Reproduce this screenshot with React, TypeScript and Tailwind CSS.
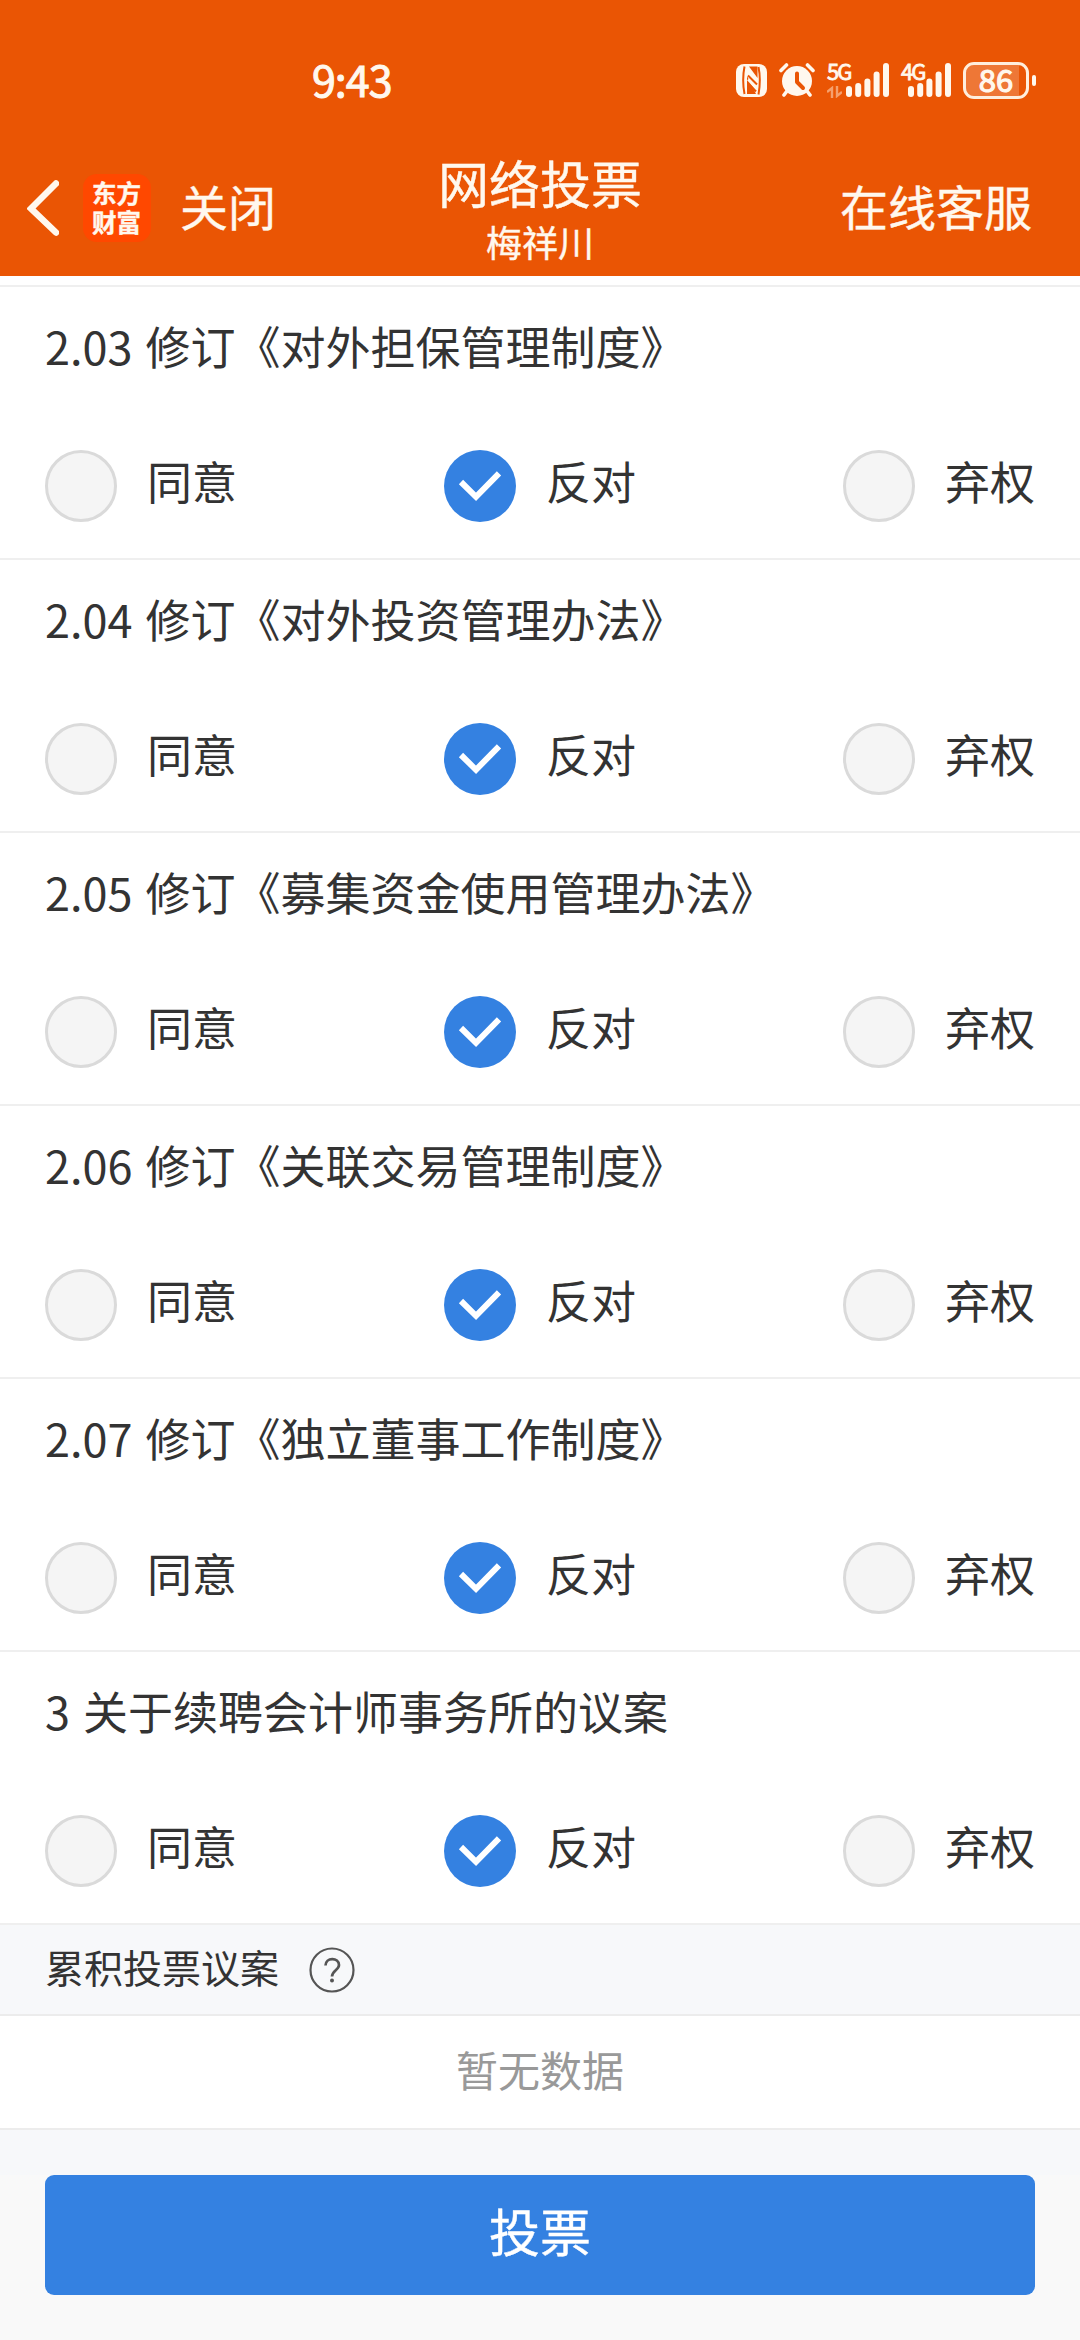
import clsx from 'clsx';
import { useState } from 'react';

const CHOICES = ['同意', '反对', '弃权'];

const PROPOSALS = [
  { no: '2.03', title: '修订《对外担保管理制度》' },
  { no: '2.04', title: '修订《对外投资管理办法》' },
  { no: '2.05', title: '修订《募集资金使用管理办法》' },
  { no: '2.06', title: '修订《关联交易管理制度》' },
  { no: '2.07', title: '修订《独立董事工作制度》' },
  { no: '3', title: '关于续聘会计师事务所的议案' },
];

const BARS = [
  { x: 0, h: 11 },
  { x: 9.2, h: 14 },
  { x: 18.4, h: 18.5 },
  { x: 27.6, h: 25.5 },
  { x: 37, h: 34 },
];

const SignalBars = () => (
  <svg width="43" height="34" viewBox="0 0 43 34" fill="#fff8ee">
    {BARS.map((bar) => (
      <rect key={bar.x} x={bar.x} y={34 - bar.h} width="6" height={bar.h} rx="3" />
    ))}
  </svg>
);

const NfcIcon = () => (
  <svg width="31" height="33" viewBox="0 0 31 33">
    <rect width="31" height="33" rx="8" fill="#fff8ee" />
    <path
      d="M8.500 2.500C7 10 7 22 8.500 30M22.500 30.500C24 22 24 10 22.500 3M12 11.500 21 20.500M12 18.500 20 27.500"
      fill="none"
      stroke="#ea5504"
      strokeWidth="2"
    />
    <path d="M11 12V30L20 30ZM13 2.500 21.500 2.500V14Z" fill="#ea5504" />
    <path d="M12 15.500 21 25" stroke="#fff8ee" strokeWidth="2.500" />
  </svg>
);

const AlarmIcon = () => (
  <svg width="36" height="34" viewBox="0 0 36 34">
    <circle cx="18" cy="18" r="15" fill="#fff8ee" />
    <path
      d="M2 7.500 7.500 2M34 7.500 28.500 2M8 28 5 32M28 28 31 32"
      stroke="#fff8ee"
      strokeWidth="3.600"
      strokeLinecap="round"
    />
    <path
      d="M18 10.500V19L24 25"
      fill="none"
      stroke="#ea5504"
      strokeWidth="4"
      strokeLinecap="round"
      strokeLinejoin="round"
    />
  </svg>
);

const StatusBar = () => (
  <div className="flex h-[138px] items-start justify-between pr-11 pl-[312px] text-[#fff8ee]">
    <span className="pt-[56px] text-[43px] leading-[44px] tracking-[-1px] [-webkit-text-stroke:1px_#fff8ee]">
      9:43
    </span>
    <div className="flex pt-[62px]">
      <div className="pt-0.5">
        <NfcIcon />
      </div>
      <div className="ml-3 pt-px">
        <AlarmIcon />
      </div>
      <div className="relative ml-[31px] pt-px">
        <SignalBars />
        <span className="absolute -top-1 -left-[19px] text-[22px] leading-6 tracking-[-2px] [-webkit-text-stroke:0.8px_#fff8ee]">
          5G
        </span>
        <svg
          className="absolute top-6 -left-[19px]"
          width="15"
          height="12"
          viewBox="0 0 15 12"
          fill="none"
          stroke="#f5a06e"
          strokeWidth="2.400"
        >
          <path d="M0 6 5 2V12M10 0V10L15 6" />
        </svg>
      </div>
      <div className="relative ml-[19px] pt-px">
        <SignalBars />
        <span className="absolute -top-1 -left-[7px] text-[22px] leading-6 tracking-[-2px] [-webkit-text-stroke:0.8px_#fff8ee]">
          4G
        </span>
      </div>
      <div className="ml-3 flex h-[37px] items-center gap-[3px]">
        <div className="relative flex h-[37px] w-[66px] items-center justify-center rounded-[11px] border-[3px] border-[#ffeedd] bg-[#ea5504]">
          <div className="absolute inset-y-0 left-0 w-[53px] rounded-l-lg bg-white/20" />
          <span className="relative -mt-[5px] text-[31px] leading-[31px] [-webkit-text-stroke:1.2px_#fff8ee]">
            86
          </span>
        </div>
        <div className="h-[11px] w-1 rounded-sm bg-[#fff8ee]" />
      </div>
    </div>
  </div>
);

const TitleBar = () => (
  <div className="grid h-[138px] grid-cols-[1fr_auto_1fr] items-start px-12 text-[#fff8ee] [-webkit-text-stroke:0.4px_#fff8ee]">
    <div className="-ml-[21px] flex items-center pt-9">
      <svg width="32" height="56" viewBox="0 0 32 56" fill="none" stroke="#fff8ee">
        <path d="M29 3.500 4 28.500 29 52.500" strokeWidth="6.500" strokeLinecap="round" />
      </svg>
      <div className="ml-6 flex size-[68px] justify-center rounded-[14px] bg-[#ff4800] pt-1">
        <span className="w-[50px] text-[24.5px] leading-[29px] font-bold break-all">东方财富</span>
      </div>
      <span className="-mt-1.5 ml-[29px] text-[48px] leading-[68px]">关闭</span>
    </div>
    <div className="flex flex-col items-center pt-3">
      <h1 className="text-[51px] leading-[64px]">网络投票</h1>
      <p className="mt-px text-[36px] leading-[52px]">梅祥川</p>
    </div>
    <span className="justify-self-end pt-[33px] text-[48px] leading-[68px]">在线客服</span>
  </div>
);

type RadioProps = {
  label: string;
  selected: boolean;
  onSelect: () => void;
};

const Radio = ({ label, selected, onSelect }: RadioProps) => (
  <button type="button" className="flex items-center gap-[30px]" onClick={onSelect}>
    <span
      className={clsx(
        'flex size-[72px] items-center justify-center rounded-full',
        selected ? 'bg-[#3481e1]' : 'border-[3px] border-[#dadada] bg-[#f5f5f5]',
      )}
    >
      {selected && (
        <svg width="72" height="72" viewBox="0 0 72 72" fill="none" stroke="#fff">
          <path d="M17 32 32 46.800 55 23.300" strokeWidth="6" />
        </svg>
      )}
    </span>
    <span className="-mt-2.5 text-[45px] leading-[60px]">{label}</span>
  </button>
);

const Proposal = ({ no, title }: { no: string; title: string }) => {
  const [choice, setChoice] = useState('反对');

  return (
    <div className="h-[273px] border-b-2 border-[#efefef] px-[45px] pt-[29px]">
      <h2 className="text-[45px] leading-[60px] whitespace-nowrap [word-spacing:3px]">
        {no} {title}
      </h2>
      <div className="mt-[74px] flex justify-between">
        {CHOICES.map((label) => (
          <Radio
            key={label}
            label={label}
            selected={choice === label}
            onSelect={() => setChoice(label)}
          />
        ))}
      </div>
    </div>
  );
};

const HelpIcon = () => (
  <svg width="46" height="46" viewBox="0 0 46 46" fill="none" stroke="#555">
    <circle cx="23" cy="23" r="21.500" strokeWidth="2.200" />
    <path
      d="M16.500 18.500C16.500 10 30 10 30 18 30 23 23 23.500 23 29.500"
      strokeWidth="2.700"
    />
    <circle cx="23" cy="33.500" r="2" fill="#555" stroke="none" />
  </svg>
);

export default function App() {
  return (
    <div className="flex h-[2340px] w-[1080px] flex-col bg-white font-['Noto_Sans_CJK_SC',sans-serif] text-[#333]">
      <header className="h-[276px] bg-[#ea5504]">
        <StatusBar />
        <TitleBar />
      </header>
      <main>
        <div className="h-[11px] border-b-2 border-[#efefef]" />
        {PROPOSALS.map((item) => (
          <Proposal key={item.no} no={item.no} title={item.title} />
        ))}
        <div className="flex h-[91px] items-center border-b-2 border-[#ececec] bg-[#f7f8fa] pl-[45px]">
          <span className="-mt-[7px] text-[39px] leading-[56px]">累积投票议案</span>
          <div className="ml-[30px]">
            <HelpIcon />
          </div>
        </div>
        <div className="flex h-[114px] items-center justify-center border-b-2 border-[#ececec] pb-[7px] text-[42px] text-[#999]">
          暂无数据
        </div>
        <div className="h-[45px] bg-[#f7f8fa]" />
      </main>
      <footer className="flex-1 bg-[#f9f9f9] px-[45px]">
        <button
          type="button"
          className="h-[120px] w-full rounded-[9px] bg-[#3481e1] pb-[9px] text-[51px] text-white [-webkit-text-stroke:0.4px_#fff]"
        >
          投票
        </button>
      </footer>
    </div>
  );
}
